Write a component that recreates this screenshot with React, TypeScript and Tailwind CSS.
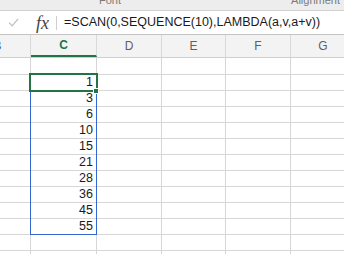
import React from "react";

const cols = [
  { name: "B", w: "w-[66px]" },
  { name: "C", w: "w-[66px]" },
  { name: "D", w: "w-[65px]" },
  { name: "E", w: "w-[64px]" },
  { name: "F", w: "w-[65px]" },
  { name: "G", w: "w-[65px]" },
];

const values = [1, 3, 6, 10, 15, 21, 28, 36, 45, 55];

function Row({ value, first }: { value?: number; first?: boolean }) {
  return (
    <div className={`-ml-[35px] flex ${first ? "h-[17px]" : "h-[16px]"} border-b border-[#d6d6d6]`}>
      {cols.map((c) => (
        <div
          key={c.name}
          className={`${c.w} shrink-0 border-r border-[#d6d6d6] flex items-center justify-end pr-[3px] text-[12.5px] text-[#1a1a1a]`}
        >
          {c.name === "C" && value !== undefined ? value : null}
        </div>
      ))}
    </div>
  );
}

export default function App() {
  return (
    <div className="w-[344px] h-[254px] overflow-hidden bg-white font-['Liberation_Sans',Arial,sans-serif]">
      {/* ribbon group labels, cut off */}
      <div className="h-[11px] bg-[#ededed] border-b border-[#d2d2d2] flex overflow-hidden text-[11px] leading-[11px] text-[#7a7a7a]">
        <span className="ml-[99px] -mt-[5px]">Font</span>
        <span className="ml-auto mr-[4px] -mt-[5px]">Alignment</span>
      </div>

      {/* Formula bar */}
      <div className="h-[24px] flex items-center border-b border-[#c4c4c4] bg-white">
        <svg width="11" height="9" viewBox="0 0 11 9" className="ml-[8px]">
          <path d="M1 4.6 L4.2 7.8 L10 1" fill="none" stroke="#c3c3c3" strokeWidth="1.3" />
        </svg>
        <span className="ml-[17px] font-['Liberation_Serif',serif] italic text-[18px] leading-none text-[#444]">
          fx
        </span>
        <div className="ml-[7px] h-[14px] w-px bg-[#cfcfcf]" />
        <span className="ml-[7px] text-[12.5px] text-[#1a1a1a] whitespace-nowrap">
          =SCAN(0,SEQUENCE(10),LAMBDA(a,v,a+v))
        </span>
      </div>

      {/* Column headers */}
      <div className="-ml-[35px] flex h-[23px] bg-[#f3f3f3] border-b border-[#cfcfcf]">
        {cols.map((c) => (
          <div
            key={c.name}
            className={`${c.w} shrink-0 border-r border-[#d9d9d9] flex items-center justify-center text-[12px] ${
              c.name === "C"
                ? "text-[#227447] font-semibold border-b-2 border-b-[#227447]"
                : "text-[#5f5f5f]"
            }`}
          >
            {c.name}
          </div>
        ))}
      </div>

      {/* Cells */}
      <div className="relative">
        <Row first />
        {values.map((v) => (
          <Row key={v} value={v} />
        ))}
        <Row />
        <Row />

        {/* spill range outline */}
        <div className="absolute left-[30px] top-[16px] w-[67px] h-[161px] border border-[#3467cf] pointer-events-none" />
        {/* active cell */}
        <div className="absolute left-[29px] top-[15px] w-[69px] h-[19px] border-2 border-[#227447] pointer-events-none" />
        {/* fill handle */}
        <div className="absolute left-[93px] top-[30px] w-[6px] h-[6px] bg-[#227447] border border-white" />
      </div>
    </div>
  );
}
